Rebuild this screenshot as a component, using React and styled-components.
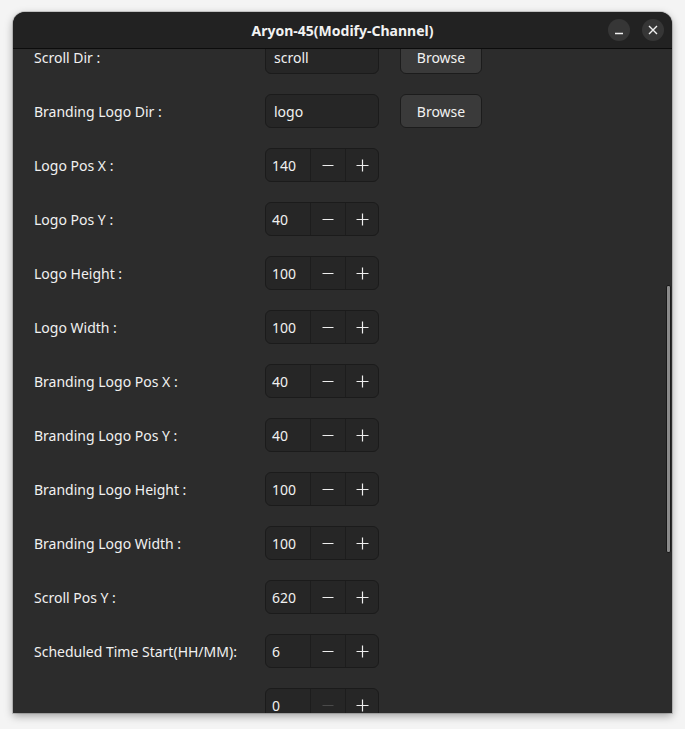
import React, { useLayoutEffect, useRef } from "react";
import styled, { createGlobalStyle } from "styled-components";

const GlobalStyle = createGlobalStyle`
  html, body {
    margin: 0;
    padding: 0;
    background: #f4f4f4;
    font-family: "Noto Sans", "DejaVu Sans", sans-serif;
  }
`;

const Desktop = styled.div`
  width: 685px;
  height: 729px;
  padding: 12px 13px 16px 13px;
  box-sizing: border-box;
`;

const Window = styled.div`
  position: relative;
  width: 659px;
  height: 701px;
  display: flex;
  flex-direction: column;
  background: #2c2c2c;
  border-radius: 12px 12px 0 0;
  overflow: hidden;
  box-shadow: 0 3px 9px rgba(0, 0, 0, 0.35), 0 0 0 1px rgba(0, 0, 0, 0.15);
`;

const TitleBar = styled.header`
  flex: 0 0 36px;
  display: flex;
  align-items: center;
  justify-content: center;
  position: relative;
  background: #222222;
  border-bottom: 1px solid #0c0c0c;
`;

const Title = styled.h1`
  margin: 0;
  color: #f2f2f2;
  font-size: 14px;
  font-weight: 700;
`;

const Controls = styled.div`
  position: absolute;
  right: 8px;
  top: 7px;
  display: flex;
  gap: 12px;
`;

const RoundButton = styled.button`
  width: 22px;
  height: 22px;
  border-radius: 50%;
  border: none;
  padding: 0;
  display: flex;
  align-items: center;
  justify-content: center;
  background: #363636;
  color: #f0f0f0;
`;

const Scroller = styled.div`
  flex: 1;
  overflow: hidden;
  position: relative;
`;

const Form = styled.div`
  display: grid;
  grid-template-columns: 231px auto;
  row-gap: 20px;
  align-items: center;
  padding: 20px 0 20px 21px;
`;

const Label = styled.span`
  color: #f1f1f1;
  font-size: 14px;
`;

const Field = styled.div`
  display: flex;
  align-items: center;
  gap: 21px;
  min-height: 34px;
`;

const Entry = styled.div`
  width: 114px;
  height: 34px;
  box-sizing: border-box;
  border: 1px solid #1b1b1b;
  border-radius: 6px;
  background: #262626;
  color: #f1f1f1;
  font-size: 14px;
  display: flex;
  align-items: center;
  padding-left: 8px;
`;

const Button = styled.button`
  width: 82px;
  height: 34px;
  box-sizing: border-box;
  border: 1px solid #1c1c1c;
  border-radius: 6px;
  background: #3a3a3a;
  color: #f1f1f1;
  font-family: inherit;
  font-size: 14px;
  padding: 0;
`;

const Spin = styled.div`
  width: 114px;
  height: 34px;
  box-sizing: border-box;
  border: 1px solid #1b1b1b;
  border-radius: 6px;
  background: #262626;
  display: grid;
  grid-template-columns: 44px 35px 1fr;
  overflow: hidden;
`;

const SpinValue = styled.div`
  display: flex;
  align-items: center;
  padding-left: 6px;
  color: #f1f1f1;
  font-size: 14px;
`;

const SpinButton = styled.div`
  display: flex;
  align-items: center;
  justify-content: center;
  border-left: 1px solid #1d1d1d;
  color: ${(p) => (p.$disabled ? "#4a4a4a" : "#eeeeee")};
`;

const ScrollThumb = styled.div`
  position: absolute;
  right: 1px;
  top: 273px;
  width: 3px;
  height: 266px;
  background: #8b8b8b;
  border: 1px solid #1a1a1a;
  border-radius: 2px;
`;

const Minus = () => (
  <svg width="12" height="12" viewBox="0 0 12 12">
    <path d="M0.5 6.5h11" stroke="currentColor" strokeWidth="1.2" />
  </svg>
);

const Plus = () => (
  <svg width="13" height="13" viewBox="0 0 13 13">
    <path d="M0.5 6.5h12M6.5 0.5v12" stroke="currentColor" strokeWidth="1.2" />
  </svg>
);

const SpinBox = ({ value, minDisabled }) => (
  <Spin>
    <SpinValue>{value}</SpinValue>
    <SpinButton $disabled={minDisabled}>
      <Minus />
    </SpinButton>
    <SpinButton>
      <Plus />
    </SpinButton>
  </Spin>
);

const rows = [
  { label: "Scroll Dir :", entry: "scroll" },
  { label: "Branding Logo Dir :", entry: "logo" },
  { label: "Logo Pos X :", spin: 140 },
  { label: "Logo Pos Y :", spin: 40 },
  { label: "Logo Height :", spin: 100 },
  { label: "Logo Width :", spin: 100 },
  { label: "Branding Logo Pos X :", spin: 40 },
  { label: "Branding Logo Pos Y :", spin: 40 },
  { label: "Branding Logo Height :", spin: 100 },
  { label: "Branding Logo Width :", spin: 100 },
  { label: "Scroll Pos Y :", spin: 620 },
  { label: "Scheduled Time Start(HH/MM):", spin: 6 },
  { label: "", spin: 0, minDisabled: true },
];

export default function App() {
  const scrollRef = useRef(null);

  useLayoutEffect(() => {
    if (scrollRef.current) scrollRef.current.scrollTop = 29;
  }, []);

  return (
    <Desktop>
      <GlobalStyle />
      <Window>
        <TitleBar>
          <Title>Aryon-45(Modify-Channel)</Title>
          <Controls>
            <RoundButton aria-label="minimize">
              <svg width="10" height="10" viewBox="0 0 10 10">
                <path d="M1 8.5h8" stroke="currentColor" strokeWidth="1.4" />
              </svg>
            </RoundButton>
            <RoundButton aria-label="close">
              <svg width="10" height="10" viewBox="0 0 10 10">
                <path d="M1 1l8 8M9 1l-8 8" stroke="currentColor" strokeWidth="1.4" />
              </svg>
            </RoundButton>
          </Controls>
        </TitleBar>
        <Scroller ref={scrollRef}>
          <Form>
            {rows.map((r, i) => (
              <React.Fragment key={i}>
                <Label>{r.label}</Label>
                <Field>
                  {r.entry !== undefined ? (
                    <>
                      <Entry>{r.entry}</Entry>
                      <Button>Browse</Button>
                    </>
                  ) : (
                    <SpinBox value={r.spin} minDisabled={r.minDisabled} />
                  )}
                </Field>
              </React.Fragment>
            ))}
          </Form>
        </Scroller>
        <ScrollThumb />
      </Window>
    </Desktop>
  );
}
